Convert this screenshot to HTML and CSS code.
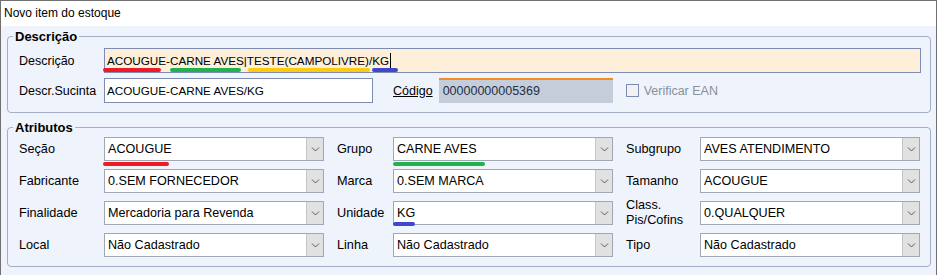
FILE: index.html
```html
<!DOCTYPE html>
<html lang="pt-BR">
<head>
    <meta charset="UTF-8">
    <meta name="viewport" content="width=device-width, initial-scale=1.0">
    <title>Novo item do estoque</title>
    <link rel="stylesheet" href="styles.css">
</head>
<body>
    <div class="window">
        <div class="titlebar">Novo item do estoque</div>

        <fieldset class="group group-desc">
            <legend>Descrição</legend>
            <div class="row">
                <span class="lbl">Descrição</span>
                <div class="field field-desc">ACOUGUE-CARNE AVES|TESTE(CAMPOLIVRE)/KG<span class="caret"></span>
                    <span class="mark red d1"></span>
                    <span class="mark green d2"></span>
                    <span class="mark yellow d3"></span>
                    <span class="mark blue d4"></span>
                </div>
            </div>
            <div class="row">
                <span class="lbl">Descr.Sucinta</span>
                <div class="field field-short">ACOUGUE-CARNE AVES/KG</div>
                <span class="link">Código</span>
                <div class="field-code">00000000005369</div>
                <span class="check"><span class="box"></span>Verificar EAN</span>
            </div>
        </fieldset>

        <fieldset class="group group-attr">
            <legend>Atributos</legend>
            <div class="grid">
                <span class="glbl">Seção</span>
                <div class="combo"><span class="val">ACOUGUE</span><span class="btn"><svg width="9" height="5" viewBox="0 0 9 5"><polyline points="1,0.5 4.5,4 8,0.5"/></svg></span><span class="mark red c1"></span></div>
                <span class="glbl mid">Grupo</span>
                <div class="combo"><span class="val">CARNE AVES</span><span class="btn"><svg width="9" height="5" viewBox="0 0 9 5"><polyline points="1,0.5 4.5,4 8,0.5"/></svg></span><span class="mark green c2"></span></div>
                <span class="glbl mid">Subgrupo</span>
                <div class="combo"><span class="val">AVES ATENDIMENTO</span><span class="btn"><svg width="9" height="5" viewBox="0 0 9 5"><polyline points="1,0.5 4.5,4 8,0.5"/></svg></span></div>

                <span class="glbl">Fabricante</span>
                <div class="combo"><span class="val">0.SEM FORNECEDOR</span><span class="btn"><svg width="9" height="5" viewBox="0 0 9 5"><polyline points="1,0.5 4.5,4 8,0.5"/></svg></span></div>
                <span class="glbl mid">Marca</span>
                <div class="combo"><span class="val">0.SEM MARCA</span><span class="btn"><svg width="9" height="5" viewBox="0 0 9 5"><polyline points="1,0.5 4.5,4 8,0.5"/></svg></span></div>
                <span class="glbl mid">Tamanho</span>
                <div class="combo"><span class="val">ACOUGUE</span><span class="btn"><svg width="9" height="5" viewBox="0 0 9 5"><polyline points="1,0.5 4.5,4 8,0.5"/></svg></span></div>

                <span class="glbl">Finalidade</span>
                <div class="combo"><span class="val">Mercadoria para Revenda</span><span class="btn"><svg width="9" height="5" viewBox="0 0 9 5"><polyline points="1,0.5 4.5,4 8,0.5"/></svg></span></div>
                <span class="glbl mid">Unidade</span>
                <div class="combo"><span class="val">KG</span><span class="btn"><svg width="9" height="5" viewBox="0 0 9 5"><polyline points="1,0.5 4.5,4 8,0.5"/></svg></span><span class="mark blue c3"></span></div>
                <span class="glbl mid two">Class.<br>Pis/Cofins</span>
                <div class="combo"><span class="val">0.QUALQUER</span><span class="btn"><svg width="9" height="5" viewBox="0 0 9 5"><polyline points="1,0.5 4.5,4 8,0.5"/></svg></span></div>

                <span class="glbl">Local</span>
                <div class="combo"><span class="val">Não Cadastrado</span><span class="btn"><svg width="9" height="5" viewBox="0 0 9 5"><polyline points="1,0.5 4.5,4 8,0.5"/></svg></span></div>
                <span class="glbl mid">Linha</span>
                <div class="combo"><span class="val">Não Cadastrado</span><span class="btn"><svg width="9" height="5" viewBox="0 0 9 5"><polyline points="1,0.5 4.5,4 8,0.5"/></svg></span></div>
                <span class="glbl mid">Tipo</span>
                <div class="combo"><span class="val">Não Cadastrado</span><span class="btn"><svg width="9" height="5" viewBox="0 0 9 5"><polyline points="1,0.5 4.5,4 8,0.5"/></svg></span></div>
            </div>
        </fieldset>
    </div>
</body>
</html>
```

FILE: styles.css
```css
body {
    margin: 0;
    background-color: #fff;
    font-family: "Liberation Sans", Arial, sans-serif;
    color: #000;
}
.window {
    width: 935px;
    height: 274px;
    border: 1px solid #707070;
    border-bottom: none;
    background-color: #eef3fc;
    overflow: hidden;
}
.titlebar {
    height: 25px;
    line-height: 25px;
    padding-left: 3px;
    background-color: #fff;
    font-size: 12px;
    color: #000;
}
.group {
    margin: 3px 5px 0 6px;
    padding: 4px 9px 9px 11px;
    border: 1px solid #a3adc6;
    border-radius: 4px;
    min-width: 0;
}
.group-attr {
    margin-top: 7px;
    padding-top: 2px;
}
legend {
    font-weight: bold;
    font-size: 13px;
    line-height: 15px;
    padding: 0 2px;
    margin-left: -6px;
    color: #000;
}
.row {
    display: flex;
    align-items: center;
    height: 25px;
}
.row + .row {
    margin-top: 5px;
}
.lbl {
    width: 85px;
    flex: none;
    font-size: 12.5px;
}
.field {
    position: relative;
    box-sizing: border-box;
    height: 25px;
    border: 1px solid #7d8cb0;
    padding-left: 2px;
    font-size: 11.7px;
    line-height: 23px;
    white-space: nowrap;
    color: #000;
}
.field-desc {
    width: 817px;
    background-color: #fdefd9;
}
.field-short {
    width: 269px;
    background-color: #fff;
}
.caret {
    display: inline-block;
    width: 1px;
    height: 17px;
    margin-left: 1px;
    background-color: #000;
    vertical-align: middle;
}
.link {
    margin-left: 20px;
    font-size: 12.5px;
    text-decoration: underline;
    color: #000;
}
.field-code {
    box-sizing: border-box;
    width: 174px;
    height: 25px;
    margin-left: 6px;
    padding-left: 4px;
    border-top: 2px solid #f58a1f;
    background-color: #c4cdd9;
    font-size: 12.5px;
    line-height: 22px;
    color: #1f2d4a;
}
.check {
    display: flex;
    align-items: center;
    gap: 5px;
    margin-left: 13px;
    font-size: 12.5px;
    color: #8a9099;
}
.box {
    box-sizing: border-box;
    width: 13px;
    height: 13px;
    border: 1px solid #7d8cb0;
    background-color: #f2f2f2;
}
.grid {
    display: grid;
    grid-template-columns: 85px 220px 69px 220px 87px 220px;
    grid-auto-rows: 24px;
    row-gap: 8px;
    align-items: center;
}
.glbl {
    font-size: 12.7px;
}
.glbl.mid {
    padding-left: 13px;
}
.glbl.two {
    line-height: 15px;
}
.combo {
    position: relative;
    display: flex;
    box-sizing: border-box;
    height: 24px;
    border: 1px solid #a2a8b3;
    background-color: #fff;
}
.combo .val {
    flex: 1;
    padding-left: 3px;
    font-size: 12.6px;
    line-height: 22px;
    color: #000;
    white-space: nowrap;
}
.combo .btn {
    display: flex;
    align-items: center;
    justify-content: center;
    width: 16px;
    border-left: 1px solid #c6c6c6;
    background-color: #e1e1e1;
}
.combo svg polyline {
    fill: none;
    stroke: #5a5a5a;
    stroke-width: 1;
}
.mark {
    position: absolute;
    height: 4px;
    border-radius: 2px;
}
.red { background-color: #ed1c24; }
.green { background-color: #22b14c; }
.yellow { background-color: #ffc90e; }
.blue { background-color: #3f48cc; }
.d1 { top: 19px; left: -2px; width: 58px; }
.d2 { top: 19px; left: 65px; width: 71px; }
.d3 { top: 19px; left: 143px; width: 122px; }
.d4 { top: 19px; left: 267px; width: 26px; }
.c1 { top: 24px; left: -2px; width: 66px; }
.c2 { top: 24px; left: -1px; width: 92px; }
.c3 { top: 20px; left: -1px; width: 22px; }
```
